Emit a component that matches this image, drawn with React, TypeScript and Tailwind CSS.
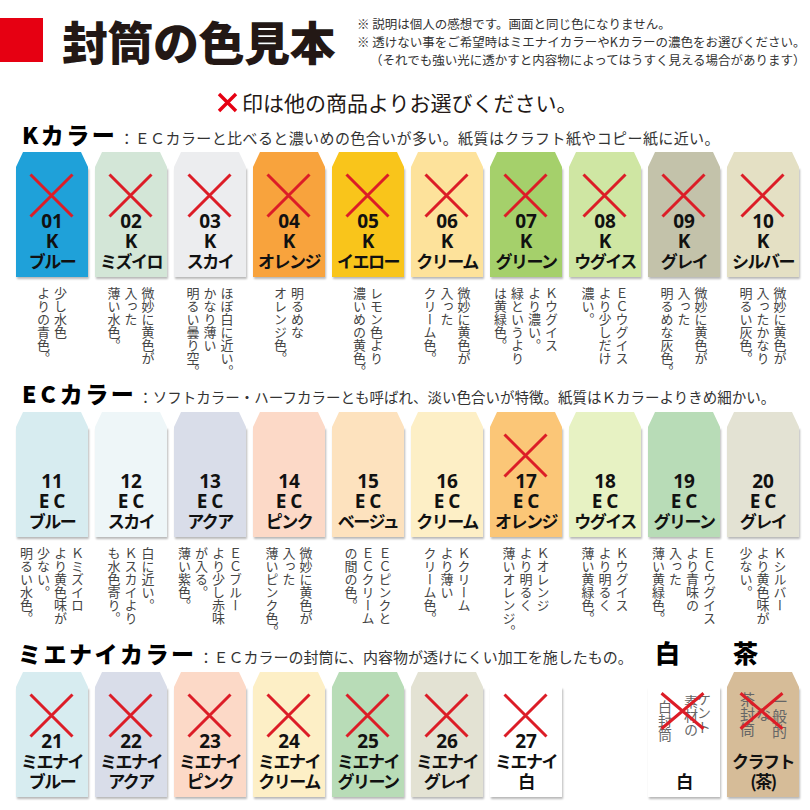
import React from "react";

type Item = {
  no?: string;
  sub?: string;
  name: string;
  bg: string;
  cross?: boolean;
  flap?: boolean;
  desc?: string[];
  note?: [string, string][];
  noteClass?: string;
};

const kItems: Item[] = [
  { no: "01", sub: "K", name: "ブルー", bg: "bg-[#1fa1d9]", cross: true, desc: ["少し水色", "よりの青色。"] },
  { no: "02", sub: "K", name: "ミズイロ", bg: "bg-[#d3e6d7]", cross: true, desc: ["微妙に黄色が", "入った", "薄い水色。"] },
  { no: "03", sub: "K", name: "スカイ", bg: "bg-[#ecedef]", cross: true, desc: ["ほぼ白に近い。", "かなり薄い", "明るい曇り空。"] },
  { no: "04", sub: "K", name: "オレンジ", bg: "bg-[#f8a33d]", cross: true, desc: ["明るめな", "オレンジ色。"] },
  { no: "05", sub: "K", name: "イエロー", bg: "bg-[#f9c51b]", cross: true, desc: ["レモン色より", "濃いめの黄色。"] },
  { no: "06", sub: "K", name: "クリーム", bg: "bg-[#fde29b]", cross: true, desc: ["微妙に黄色が", "入った", "クリーム色。"] },
  { no: "07", sub: "K", name: "グリーン", bg: "bg-[#a5d06b]", cross: true, desc: ["Ｋウグイス", "より濃い。", "緑というより", "は黄緑色。"] },
  { no: "08", sub: "K", name: "ウグイス", bg: "bg-[#cfe6a3]", cross: true, desc: ["ＥＣウグイス", "より少しだけ", "濃い。"] },
  { no: "09", sub: "K", name: "グレイ", bg: "bg-[#c3c2aa]", cross: true, desc: ["微妙に黄色が", "入った", "明るめな灰色。"] },
  { no: "10", sub: "K", name: "シルバー", bg: "bg-[#e4e0c4]", cross: true, desc: ["微妙に黄色が", "入ったかなり", "明るい灰色。"] },
];

const ecItems: Item[] = [
  { no: "11", sub: "EC", name: "ブルー", bg: "bg-[#d7ecf0]", desc: ["Ｋミズイロ", "より黄色味が", "少ない。", "明るい水色。"] },
  { no: "12", sub: "EC", name: "スカイ", bg: "bg-[#eef6f8]", desc: ["白に近い。", "Ｋスカイより", "も水色寄り。"] },
  { no: "13", sub: "EC", name: "アクア", bg: "bg-[#d9dde9]", desc: ["ＥＣブルー", "より少し赤味", "が入る。", "薄い紫色。"] },
  { no: "14", sub: "EC", name: "ピンク", bg: "bg-[#fcd9c7]", desc: ["微妙に黄色が", "入った", "薄いピンク色。"] },
  { no: "15", sub: "EC", name: "ベージュ", bg: "bg-[#fde2be]", desc: ["ＥＣピンクと", "ＥＣクリーム", "の間の色。"] },
  { no: "16", sub: "EC", name: "クリーム", bg: "bg-[#fdefc6]", desc: ["Ｋクリーム", "より薄い", "クリーム色。"] },
  { no: "17", sub: "EC", name: "オレンジ", bg: "bg-[#fbc677]", cross: true, desc: ["Ｋオレンジ", "より明るく", "薄いオレンジ。"] },
  { no: "18", sub: "EC", name: "ウグイス", bg: "bg-[#e7f2c3]", desc: ["Ｋウグイス", "より明るく", "薄い黄緑色。"] },
  { no: "19", sub: "EC", name: "グリーン", bg: "bg-[#b8dcb7]", desc: ["ＥＣウグイス", "より青味の", "入った", "薄い黄緑色。"] },
  { no: "20", sub: "EC", name: "グレイ", bg: "bg-[#e3e2d3]", desc: ["Ｋシルバー", "より黄色味が", "少ない。"] },
];

const mienaiItems: Item[] = [
  { no: "21", sub: "ミエナイ", name: "ブルー", bg: "bg-[#d7ecf0]", cross: true },
  { no: "22", sub: "ミエナイ", name: "アクア", bg: "bg-[#d9dde9]", cross: true },
  { no: "23", sub: "ミエナイ", name: "ピンク", bg: "bg-[#fcd9c7]", cross: true },
  { no: "24", sub: "ミエナイ", name: "クリーム", bg: "bg-[#fdefc6]", cross: true },
  { no: "25", sub: "ミエナイ", name: "グリーン", bg: "bg-[#b8dcb7]", cross: true },
  { no: "26", sub: "ミエナイ", name: "グレイ", bg: "bg-[#e3e2d3]", cross: true },
  { no: "27", sub: "ミエナイ", name: "白", bg: "bg-white", cross: true, flap: false },
];

const white: Item = {
  name: "白",
  bg: "bg-white",
  cross: true,
  flap: false,
  noteClass: "leading-[13px] text-[14px]",
  note: [
    ["ケント", "pt-0"],
    ["素材の", "pt-[3px]"],
    ["\u3000", "pt-0"],
    ["白封筒", "pt-[8px]"],
  ],
};

const kraft: Item = {
  sub: "クラフト",
  name: "(茶)",
  bg: "bg-[#d6bc98]",
  cross: true,
  noteClass: "leading-[16px] text-[15px]",
  note: [
    ["一般的", "pt-[2px]"],
    ["\u3000な", "pt-0"],
    ["茶封筒", "pt-0"],
  ],
};

function Cross({ className }: { className?: string }) {
  return (
    <svg viewBox="0 0 45 45" preserveAspectRatio="none" className={className}>
      <path
        d="M1.5 1.5L43.5 43.5M43.5 1.5L1.5 43.5"
        stroke="#dc1d27"
        strokeWidth="3"
        fill="none"
        vectorEffect="non-scaling-stroke"
      />
    </svg>
  );
}

const latin = "font-['Open_Sans',sans-serif] font-bold text-[19px] leading-[20px] h-[20px]";
const kana = "font-bold text-[17px] leading-[20px] h-[20px] tracking-[-1.5px] whitespace-nowrap";

function SubLine({ text }: { text?: string }) {
  if (!text) return <div className="h-[20px]" />;
  if (text === "K") return <div className={latin}>K</div>;
  if (text === "EC") return <div className={`${latin} tracking-[4px] pl-[4px]`}>EC</div>;
  return <div className={kana}>{text}</div>;
}

function Envelope({ item }: { item: Item }) {
  return (
    <div className="w-[72px] h-[125px] flex flex-col">
      {item.flap === false ? (
        <div className="h-[15px]" />
      ) : (
        <div className={`h-[15px] ${item.bg} [clip-path:polygon(7px_0,65px_0,100%_100%,0_100%)]`} />
      )}
      <div
        className={`relative flex-1 flex flex-col items-center text-[#111] ${item.bg} shadow-[1px_2px_2px_rgba(0,0,0,0.28)] ${
          item.note ? "pt-[5px]" : "pt-[44px]"
        }`}
      >
        {item.note && (
          <div className={`h-[39px] flex justify-center text-[#666] ${item.noteClass}`}>
            <div className="[writing-mode:vertical-rl] whitespace-nowrap">
              {item.note.map(([t, c], i) => (
                <div key={i} className={c}>
                  {t}
                </div>
              ))}
            </div>
          </div>
        )}
        {item.no ? <div className={latin}>{item.no}</div> : <div className="h-[20px]" />}
        <SubLine text={item.sub} />
        <div className={kana}>{item.name}</div>
        {item.cross && (
          <Cross
            className={
              item.note
                ? "absolute top-[5px] left-[12px] w-[45px] h-[38px]"
                : "absolute top-[6px] left-[13px] w-[45px] h-[45px]"
            }
          />
        )}
      </div>
    </div>
  );
}

function Desc({ lines, h }: { lines?: string[]; h: string }) {
  return (
    <div className={`mt-[10px] flex justify-center ${h}`}>
      <div className="[writing-mode:vertical-rl] text-[13px] leading-[17px] text-[#444] whitespace-nowrap">
        {lines?.map((l, i) => (
          <div key={i}>{l}</div>
        ))}
      </div>
    </div>
  );
}

function Heading({ children }: { children: React.ReactNode }) {
  return <h2 className="text-[23px] leading-none font-black tracking-[2.5px] text-black">{children}</h2>;
}

export default function App() {
  return (
    <div className="w-[810px] h-[810px] bg-white overflow-hidden font-['Noto_Sans_CJK_JP',sans-serif] text-[#231815]">
      <header className="flex h-[88px] items-start">
        <div className="mt-[18px] w-[43px] h-[44px] bg-[#e60012]" />
        <h1 className="ml-[19px] mt-[17px] text-[46px] leading-none font-black tracking-[-0.5px]">封筒の色見本</h1>
        <div className="ml-[22px] mt-[15px] text-[12.5px] leading-[18px] text-[#333] whitespace-nowrap">
          <p>※ 説明は個人の感想です。画面と同じ色になりません。</p>
          <p>※ 透けない事をご希望時はミエナイカラーやKカラーの濃色をお選びください。</p>
          <p className="pl-[13px]">（それでも強い光に透かすと内容物によってはうすく見える場合があります）</p>
        </div>
      </header>

      <div className="flex items-center h-[28px] pl-[217px]">
        <svg viewBox="0 0 21 21" className="w-[21px] h-[21px]">
          <path d="M2 2L19 19M19 2L2 19" stroke="#e60012" strokeWidth="3.4" fill="none" />
        </svg>
        <span className="ml-[4px] text-[21px] leading-[28px]">印は他の商品よりお選びください。</span>
      </div>

      <section>
        <div className="mt-[7px] pl-[22px] h-[23px] flex items-baseline">
          <Heading>Kカラー</Heading>
          <p className="ml-[2px] text-[15px] leading-none tracking-[0.4px] text-[#333] whitespace-nowrap">
            ：ＥＣカラーと比べると濃いめの色合いが多い。紙質はクラフト紙やコピー紙に近い。
          </p>
        </div>
        <div className="mt-[6px] pl-[16px] flex gap-[7px]">
          {kItems.map((it) => (
            <div key={it.no} className="w-[72px]">
              <Envelope item={it} />
              <Desc lines={it.desc} h="h-[95px]" />
            </div>
          ))}
        </div>
      </section>

      <section>
        <div className="pl-[22px] h-[23px] flex items-baseline">
          <Heading>
            <span className="tracking-[4px]">EC</span>カラー
          </Heading>
          <p className="ml-[2px] text-[14.5px] leading-none text-[#333] whitespace-nowrap">
            ：ソフトカラー・ハーフカラーとも呼ばれ、淡い色合いが特徴。紙質はＫカラーよりきめ細かい。
          </p>
        </div>
        <div className="mt-[7px] pl-[16px] flex gap-[7px]">
          {ecItems.map((it) => (
            <div key={it.no} className="w-[72px]">
              <Envelope item={it} />
              <Desc lines={it.desc} h="h-[93px]" />
            </div>
          ))}
        </div>
      </section>

      <section className="pl-[16px]">
        <div className="h-[23px] flex items-baseline">
          <div className="w-[632px] pl-[2px] flex items-baseline">
            <Heading>ミエナイカラー</Heading>
            <p className="ml-[2px] text-[15px] leading-none text-[#333] whitespace-nowrap">
              ：ＥＣカラーの封筒に、内容物が透けにくい加工を施したもの。
            </p>
          </div>
          <div className="w-[79px] pl-[7px] text-[25px] leading-none font-black text-black">白</div>
          <div className="pl-[6px] text-[25px] leading-none font-black text-black">茶</div>
        </div>
        <div className="mt-[9px] flex gap-[7px]">
          {mienaiItems.map((it) => (
            <Envelope key={it.no} item={it} />
          ))}
          <div className="w-[72px]" />
          <Envelope item={white} />
          <Envelope item={kraft} />
        </div>
      </section>
    </div>
  );
}
